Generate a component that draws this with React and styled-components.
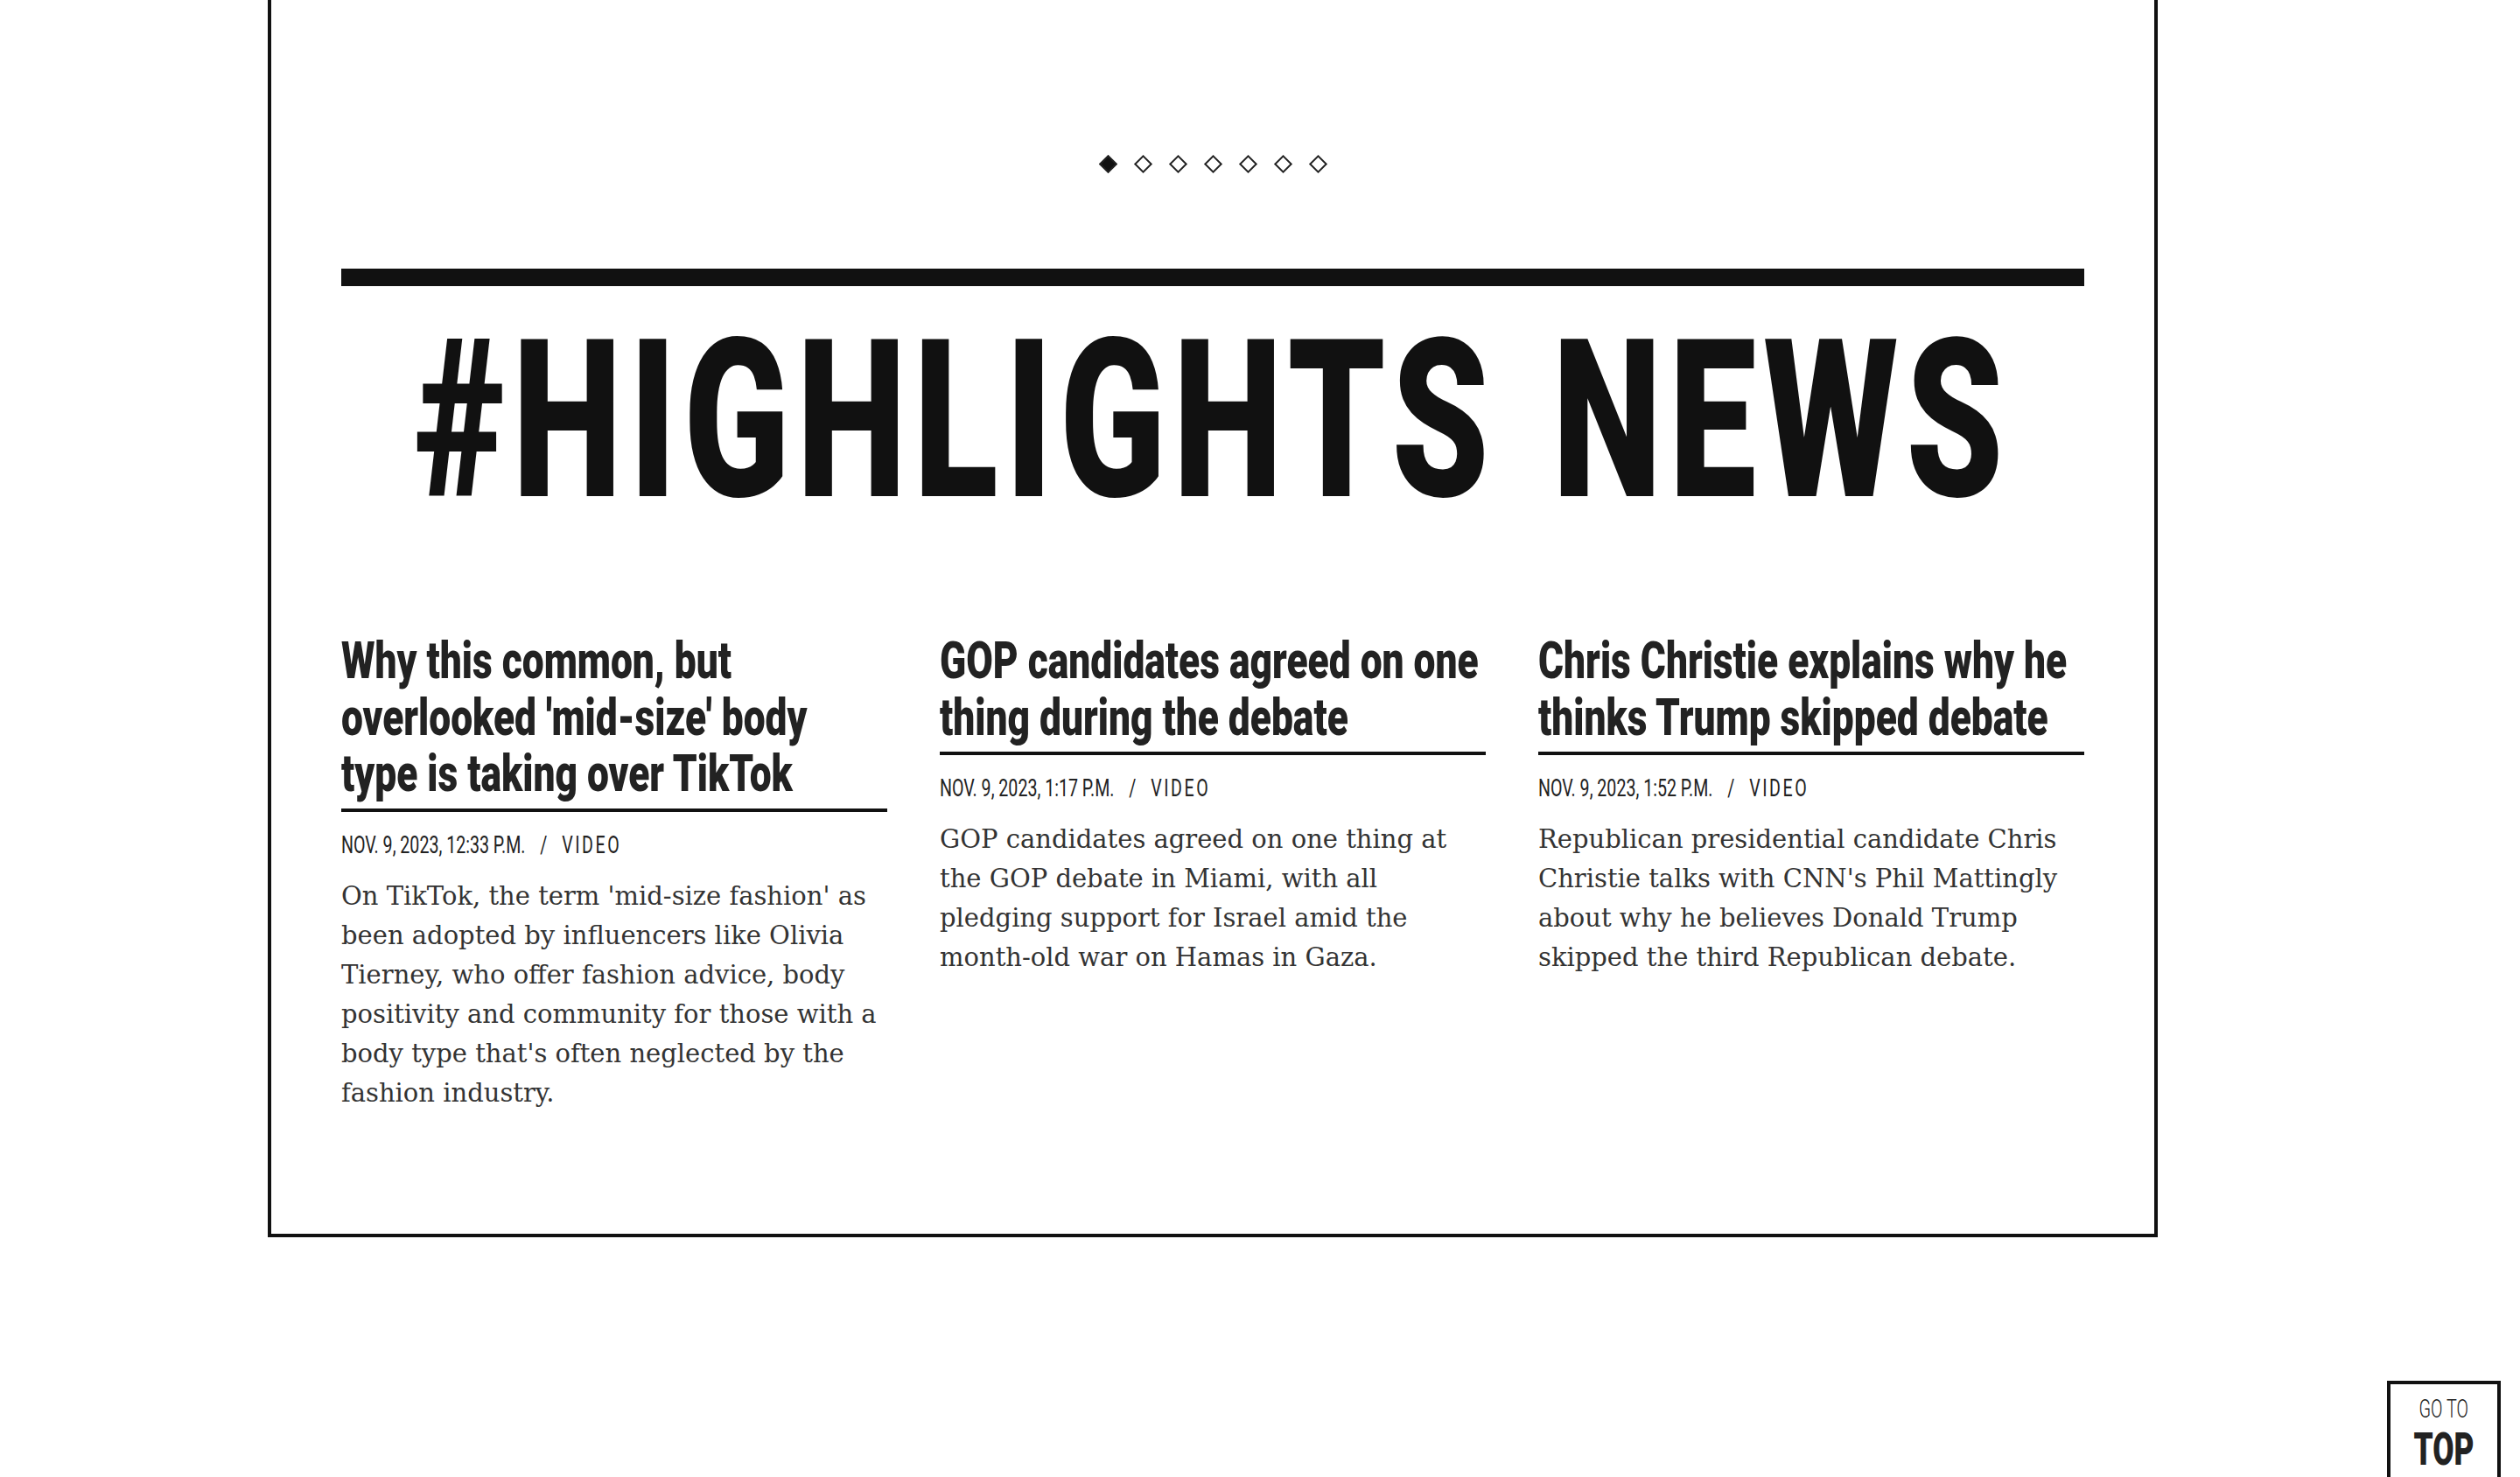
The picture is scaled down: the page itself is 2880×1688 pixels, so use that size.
import React from "react";
import styled, { createGlobalStyle } from "styled-components";

const GlobalStyle = createGlobalStyle`
  html, body {
    margin: 0;
    padding: 0;
    background: #ffffff;
  }
  body {
    font-family: "Roboto", "Liberation Sans", sans-serif;
    color: #111111;
  }
`;

const Page = styled.div`
  width: 2880px;
  min-height: 1688px;
  overflow: hidden;
  background: #ffffff;
`;

const Frame = styled.section`
  box-sizing: border-box;
  width: 2160px;
  margin-left: 306px;
  border: 4px solid #111111;
  border-top: none;
  padding: 176px 80px 138px;
`;

const Dots = styled.div`
  display: flex;
  justify-content: center;
  align-items: center;
  gap: 25px;
  height: 22px;
`;

const Dot = styled.span`
  box-sizing: border-box;
  width: 15px;
  height: 15px;
  border: 2px solid #222222;
  background: ${(p) => (p.$active ? "#111111" : "transparent")};
  transform: rotate(45deg);
`;

const Rule = styled.div`
  height: 20px;
  margin-top: 109px;
  background: #111111;
`;

/* condensed type: the installed families have no condensed cut, so the
   text box is widened by 1/k and scaled back horizontally */
const Squeeze = styled.span`
  display: block;
  width: ${(p) => 100 / p.$k}%;
  transform: scaleX(${(p) => p.$k});
  transform-origin: left top;
`;

const Title = styled.h1`
  margin: 28px 0 0;
  font-family: "Roboto", sans-serif;
  font-weight: 900;
  font-size: 252px;
  line-height: 252px;
  color: #111111;
  text-align: center;
  white-space: nowrap;
  letter-spacing: 12px;
  word-spacing: 16px;
`;

const Grid = styled.div`
  display: grid;
  grid-template-columns: repeat(3, 1fr);
  column-gap: 60px;
  align-items: start;
  margin-top: 116px;
`;

const Article = styled.article`
  display: flex;
  flex-direction: column;
  min-width: 0;
`;

const Headline = styled.h2`
  margin: 0;
  padding-bottom: 7px;
  border-bottom: 4px solid #111111;
  font-family: "Roboto", sans-serif;
  font-weight: 900;
  font-size: 59px;
  line-height: 64.5px;
  color: #222222;
`;

const Meta = styled.div`
  margin-top: 24px;
  font-family: "Roboto", sans-serif;
  font-weight: 400;
  font-size: 28px;
  line-height: 28px;
  color: #222222;
  white-space: nowrap;
`;

const Sep = styled.span`
  margin: 0 24px;
`;

const Category = styled.span`
  letter-spacing: 0.13em;
`;

const Summary = styled.p`
  margin: 22px 0 0;
  font-family: "DejaVu Serif", "Liberation Serif", serif;
  font-weight: 400;
  font-size: 29px;
  line-height: 45px;
  color: #333333;
`;

const GoTop = styled.a`
  position: fixed;
  right: 22px;
  bottom: -20px;
  box-sizing: border-box;
  width: 130px;
  height: 130px;
  display: flex;
  flex-direction: column;
  align-items: center;
  padding-top: 16px;
  border: 4px solid #111111;
  background: #ffffff;
  color: #222222;
  text-decoration: none;
  font-family: "Roboto", sans-serif;
`;

const GoLabel = styled.span`
  display: inline-block;
  white-space: nowrap;
  margin-top: ${(p) => (p.$strong ? "13px" : "0")};
  font-weight: ${(p) => (p.$strong ? 900 : 300)};
  font-size: ${(p) => (p.$strong ? "51px" : "30px")};
  line-height: ${(p) => (p.$strong ? "44px" : "24px")};
  transform: scaleX(${(p) => p.$k});
  transform-origin: center top;
`;

const articles = [
  {
    title: "Why this common, but overlooked 'mid-size' body type is taking over TikTok",
    date: "NOV. 9, 2023, 12:33 P.M.",
    summary:
      "On TikTok, the term 'mid-size fashion' as been adopted by influencers like Olivia Tierney, who offer fashion advice, body positivity and community for those with a body type that's often neglected by the fashion industry.",
  },
  {
    title: "GOP candidates agreed on one thing during the debate",
    date: "NOV. 9, 2023, 1:17 P.M.",
    summary:
      "GOP candidates agreed on one thing at the GOP debate in Miami, with all pledging support for Israel amid the month-old war on Hamas in Gaza.",
  },
  {
    title: "Chris Christie explains why he thinks Trump skipped debate",
    date: "NOV. 9, 2023, 1:52 P.M.",
    summary:
      "Republican presidential candidate Chris Christie talks with CNN's Phil Mattingly about why he believes Donald Trump skipped the third Republican debate.",
  },
];

export default function App() {
  return (
    <Page>
      <GlobalStyle />
      <Frame>
        <Dots>
          {Array.from({ length: 7 }).map((_, i) => (
            <Dot key={i} $active={i === 0} />
          ))}
        </Dots>
        <Rule />
        <Title>
          <Squeeze $k={0.705}>#HIGHLIGHTS NEWS</Squeeze>
        </Title>
        <Grid>
          {articles.map((a) => (
            <Article key={a.title}>
              <Headline>
                <Squeeze $k={0.751}>{a.title}</Squeeze>
              </Headline>
              <Meta>
                <Squeeze $k={0.7}>
                  {a.date}
                  <Sep>/</Sep>
                  <Category>VIDEO</Category>
                </Squeeze>
              </Meta>
              <Summary>{a.summary}</Summary>
            </Article>
          ))}
        </Grid>
      </Frame>
      <GoTop href="#">
        <GoLabel $k={0.66}>GO TO</GoLabel>
        <GoLabel $strong $k={0.69}>TOP</GoLabel>
      </GoTop>
    </Page>
  );
}
